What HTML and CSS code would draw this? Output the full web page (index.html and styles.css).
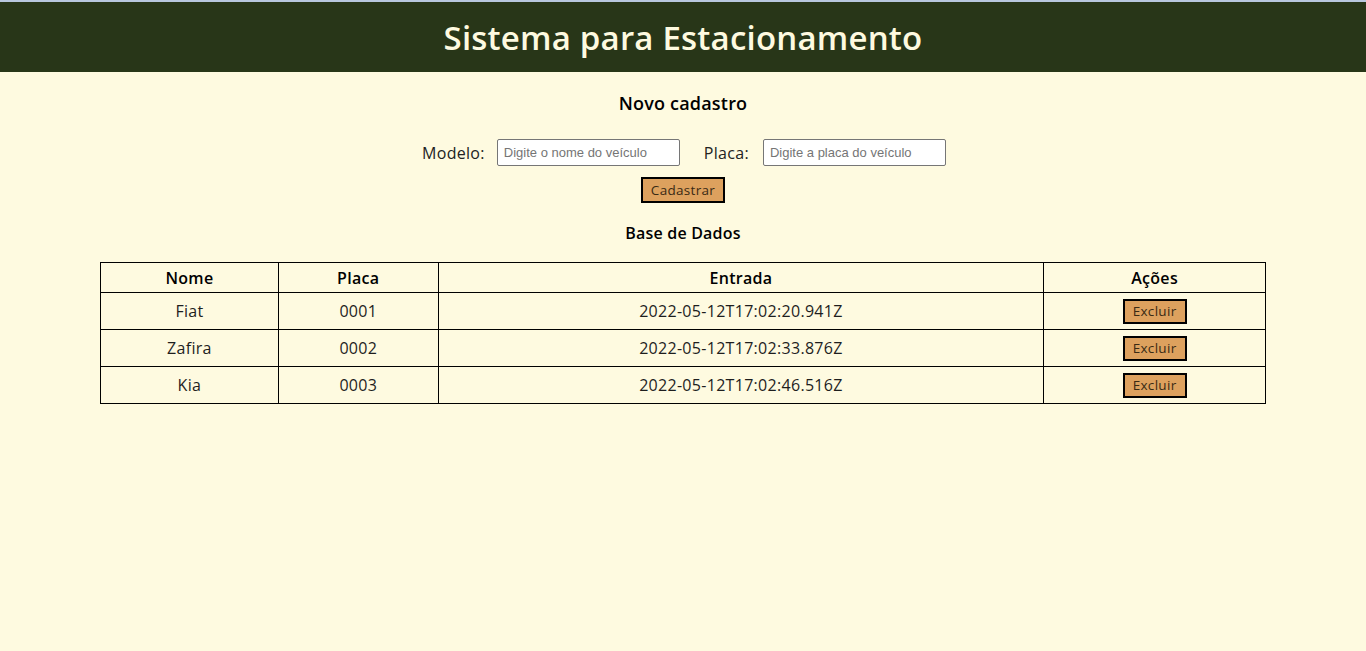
FILE: index.html
```html
<!DOCTYPE html>
<html lang="pt-BR">
<head>
<meta charset="utf-8">
<title>Sistema para Estacionamento</title>
<link rel="stylesheet" href="styles.css">
</head>
<body>
<div class="topline"></div>
<header class="header">
  <h1 class="title">Sistema para Estacionamento</h1>
</header>
<main class="main">
  <h2 class="section-title">Novo cadastro</h2>
  <form class="form">
    <div class="fields">
      <label class="label" for="modelo">Modelo:</label>
      <input class="input" id="modelo" type="text" placeholder="Digite o nome do veículo">
      <label class="label label-placa" for="placa">Placa:</label>
      <input class="input input-placa" id="placa" type="text" placeholder="Digite a placa do veículo">
    </div>
    <button class="btn btn-cadastrar" type="button">Cadastrar</button>
  </form>
  <h3 class="section-sub">Base de Dados</h3>
  <table class="table">
    <thead>
      <tr>
        <th class="col-nome">Nome</th>
        <th class="col-placa">Placa</th>
        <th class="col-entrada">Entrada</th>
        <th class="col-acoes">Ações</th>
      </tr>
    </thead>
    <tbody>
      <tr>
        <td>Fiat</td>
        <td>0001</td>
        <td>2022-05-12T17:02:20.941Z</td>
        <td><button class="btn btn-excluir" type="button">Excluir</button></td>
      </tr>
      <tr>
        <td>Zafira</td>
        <td>0002</td>
        <td>2022-05-12T17:02:33.876Z</td>
        <td><button class="btn btn-excluir" type="button">Excluir</button></td>
      </tr>
      <tr>
        <td>Kia</td>
        <td>0003</td>
        <td>2022-05-12T17:02:46.516Z</td>
        <td><button class="btn btn-excluir" type="button">Excluir</button></td>
      </tr>
    </tbody>
  </table>
</main>
</body>
</html>
```
FILE: styles.css
```css
* { box-sizing: border-box; }
html, body {
  margin: 0;
  padding: 0;
  background: #fefae0;
  font-family: "Open Sans", "Noto Sans", sans-serif;
  color: #1b1b1b;
}
.topline {
  height: 2px;
  background: #b8c7de;
}
.header {
  background: #283618;
  height: 70px;
  display: flex;
  align-items: center;
  justify-content: center;
}
.title {
  margin: 0;
  color: #fefae0;
  font-size: 33px;
  font-weight: 600;
  letter-spacing: 0.2px;
}
.main {
  display: flex;
  flex-direction: column;
  align-items: center;
}
.section-title {
  margin: 19px 0 0;
  font-size: 18px;
  font-weight: 600;
  line-height: 24px;
  letter-spacing: 0.2px;
  color: #000;
}
.form {
  display: flex;
  flex-direction: column;
  align-items: center;
  margin-top: 24px;
}
.fields {
  display: flex;
  align-items: center;
  gap: 12px;
  margin-left: 2px;
}
.label {
  font-size: 16px;
  letter-spacing: 0.3px;
  color: #222;
}
.label-placa { margin-left: 12px; }
.input-placa { margin-left: 2px; }
.input {
  width: 183px;
  height: 27px;
  border: 1px solid #767676;
  border-radius: 2px;
  background: #fff;
  padding: 0 6px;
  font-family: "Liberation Sans", Arial, sans-serif;
  font-size: 13px;
}
.input::placeholder { color: #757575; }
.btn {
  background: #dda15e;
  border: 2px solid #000;
  font-family: "Open Sans", "Noto Sans", sans-serif;
  font-size: 13.5px;
  color: #3a2a14;
  padding: 0;
  letter-spacing: 0.3px;
}
.btn-cadastrar {
  margin-top: 11px;
  width: 84px;
  height: 26px;
}
.section-sub {
  margin: 19px 0 0;
  font-size: 16px;
  font-weight: 600;
  line-height: 22px;
  letter-spacing: 0.2px;
  color: #000;
}
.table {
  margin-top: 18px;
  width: 1166px;
  border-collapse: collapse;
  font-size: 16px;
}
.table th, .table td {
  border: 1px solid #000;
  text-align: center;
  letter-spacing: 0.3px;
}
.table th {
  height: 30px;
  font-weight: 600;
  color: #000;
  padding: 0;
}
.table td {
  height: 37px;
  padding: 0;
  color: #1e1e1e;
}
.col-nome { width: 178px; }
.col-placa { width: 160px; }
.col-entrada { width: 606px; }
.col-acoes { width: 222px; }
.btn-excluir {
  width: 64px;
  height: 25px;
  vertical-align: middle;
}
```
